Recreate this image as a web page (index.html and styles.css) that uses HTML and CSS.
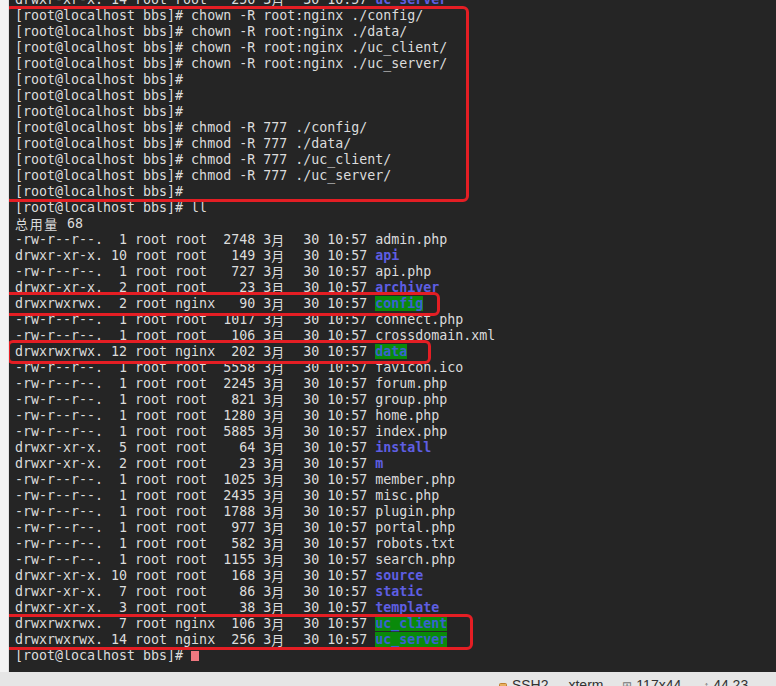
FILE: index.html
```html
<!DOCTYPE html>
<html lang="en">
<head>
    <meta charset="UTF-8">
    <title>xterm - bbs</title>
    <link rel="stylesheet" href="styles.css">
</head>
<body>
    <div class="window">
        <div class="main">
            <div class="gutter"></div>
            <div class="term">
                <div class="screen">
                    <div class="ln">drwxr-xr-x. 14 root root   256 3<span class="w">月</span>  30 10:57 <span class="dir">uc_server</span></div>
                    <div class="ln">[root@localhost bbs]# chown -R root:nginx ./config/</div>
                    <div class="ln">[root@localhost bbs]# chown -R root:nginx ./data/</div>
                    <div class="ln">[root@localhost bbs]# chown -R root:nginx ./uc_client/</div>
                    <div class="ln">[root@localhost bbs]# chown -R root:nginx ./uc_server/</div>
                    <div class="ln">[root@localhost bbs]#</div>
                    <div class="ln">[root@localhost bbs]#</div>
                    <div class="ln">[root@localhost bbs]#</div>
                    <div class="ln">[root@localhost bbs]# chmod -R 777 ./config/</div>
                    <div class="ln">[root@localhost bbs]# chmod -R 777 ./data/</div>
                    <div class="ln">[root@localhost bbs]# chmod -R 777 ./uc_client/</div>
                    <div class="ln">[root@localhost bbs]# chmod -R 777 ./uc_server/</div>
                    <div class="ln">[root@localhost bbs]#</div>
                    <div class="ln">[root@localhost bbs]# ll</div>
                    <div class="ln"><span class="w narrow">总</span><span class="w narrow">用</span><span class="w narrow">量</span> 68</div>
                    <div class="ln">-rw-r--r--.  1 root root  2748 3<span class="w">月</span>  30 10:57 admin.php</div>
                    <div class="ln">drwxr-xr-x. 10 root root   149 3<span class="w">月</span>  30 10:57 <span class="dir">api</span></div>
                    <div class="ln">-rw-r--r--.  1 root root   727 3<span class="w">月</span>  30 10:57 api.php</div>
                    <div class="ln">drwxr-xr-x.  2 root root    23 3<span class="w">月</span>  30 10:57 <span class="dir">archiver</span></div>
                    <div class="ln">drwxrwxrwx.  2 root nginx   90 3<span class="w">月</span>  30 10:57 <span class="ow">config</span></div>
                    <div class="ln">-rw-r--r--.  1 root root  1017 3<span class="w">月</span>  30 10:57 connect.php</div>
                    <div class="ln">-rw-r--r--.  1 root root   106 3<span class="w">月</span>  30 10:57 crossdomain.xml</div>
                    <div class="ln">drwxrwxrwx. 12 root nginx  202 3<span class="w">月</span>  30 10:57 <span class="ow">data</span></div>
                    <div class="ln">-rw-r--r--.  1 root root  5558 3<span class="w">月</span>  30 10:57 favicon.ico</div>
                    <div class="ln">-rw-r--r--.  1 root root  2245 3<span class="w">月</span>  30 10:57 forum.php</div>
                    <div class="ln">-rw-r--r--.  1 root root   821 3<span class="w">月</span>  30 10:57 group.php</div>
                    <div class="ln">-rw-r--r--.  1 root root  1280 3<span class="w">月</span>  30 10:57 home.php</div>
                    <div class="ln">-rw-r--r--.  1 root root  5885 3<span class="w">月</span>  30 10:57 index.php</div>
                    <div class="ln">drwxr-xr-x.  5 root root    64 3<span class="w">月</span>  30 10:57 <span class="dir">install</span></div>
                    <div class="ln">drwxr-xr-x.  2 root root    23 3<span class="w">月</span>  30 10:57 <span class="dir">m</span></div>
                    <div class="ln">-rw-r--r--.  1 root root  1025 3<span class="w">月</span>  30 10:57 member.php</div>
                    <div class="ln">-rw-r--r--.  1 root root  2435 3<span class="w">月</span>  30 10:57 misc.php</div>
                    <div class="ln">-rw-r--r--.  1 root root  1788 3<span class="w">月</span>  30 10:57 plugin.php</div>
                    <div class="ln">-rw-r--r--.  1 root root   977 3<span class="w">月</span>  30 10:57 portal.php</div>
                    <div class="ln">-rw-r--r--.  1 root root   582 3<span class="w">月</span>  30 10:57 robots.txt</div>
                    <div class="ln">-rw-r--r--.  1 root root  1155 3<span class="w">月</span>  30 10:57 search.php</div>
                    <div class="ln">drwxr-xr-x. 10 root root   168 3<span class="w">月</span>  30 10:57 <span class="dir">source</span></div>
                    <div class="ln">drwxr-xr-x.  7 root root    86 3<span class="w">月</span>  30 10:57 <span class="dir">static</span></div>
                    <div class="ln">drwxr-xr-x.  3 root root    38 3<span class="w">月</span>  30 10:57 <span class="dir">template</span></div>
                    <div class="ln">drwxrwxrwx.  7 root nginx  106 3<span class="w">月</span>  30 10:57 <span class="ow">uc_client</span></div>
                    <div class="ln">drwxrwxrwx. 14 root nginx  256 3<span class="w">月</span>  30 10:57 <span class="ow">uc_server</span></div>
                    <div class="ln">[root@localhost bbs]# <span class="cursor"></span></div>
                </div>

                <!-- red highlight marks drawn over the screenshot -->
                <div class="mark mark-cmds"></div>
                <div class="mark mark-config"></div>
                <div class="mark mark-data"></div>
                <div class="mark mark-uc"></div>
            </div>
        </div>
        <div class="status">
            <span class="item ssh">
                <svg class="lock" width="8" height="10" viewBox="0 0 8 10">
                    <rect x="0.5" y="3.5" width="7" height="6" rx="1" fill="#e8b060" stroke="#c08030"/>
                </svg>
                SSH2
            </span>
            <span class="item term-type">xterm</span>
            <span class="item size"><span class="glyph">&#8862;</span> 117x44</span>
            <span class="item pos"><span class="glyph">&#8597;</span> 44,23</span>
        </div>
    </div>
</body>
</html>
```

FILE: styles.css
```css
body {
    margin: 0;
    padding: 0;
    background-color: #f0f0f0;
    overflow: hidden;
}

.window {
    width: 776px;
    height: 686px;
    display: flex;
    flex-direction: column;
}

.main {
    display: flex;
    height: 672px;
}

.gutter {
    width: 9px;
    background-color: #f3f3f3;
    border-right: 1px solid #e2e2e2;
    box-sizing: border-box;
}

.term {
    position: relative;
    flex: 1;
    background-color: #252525;
    overflow: hidden;
}

.screen {
    margin-top: -8px;
    padding-left: 6px;
    font-family: "DejaVu Sans Mono", monospace;
    font-size: 13.3px;
    color: #dcdcdc;
}

.ln {
    height: 16px;
    line-height: 16px;
    white-space: pre;
}

.w {
    display: inline-block;
    width: 16px;
    height: 16px;
    vertical-align: top;
    font-family: "Noto Sans CJK SC", sans-serif;
    font-size: 13px;
    line-height: 16px;
}

.w.narrow {
    width: 14.67px;
}

.dir {
    color: #5e5ee2;
    font-weight: bold;
}

.ow {
    color: #3a62cf;
    font-weight: bold;
    background-color: #0a8a0a;
}

.cursor {
    display: inline-block;
    width: 8px;
    height: 10px;
    vertical-align: -1px;
    background-color: #f07880;
}

.mark {
    position: absolute;
    border: 3px solid #e41e24;
    border-radius: 6px;
    box-sizing: border-box;
}

.mark-cmds {
    left: -4px;
    top: 6px;
    width: 464px;
    height: 196px;
}

.mark-config {
    left: -8px;
    top: 292px;
    width: 439px;
    height: 24px;
}

.mark-data {
    left: -2px;
    top: 340px;
    width: 424px;
    height: 24px;
}

.mark-uc {
    left: -8px;
    top: 614px;
    width: 472px;
    height: 36px;
}

.status {
    height: 14px;
    background-color: #e6e6e6;
    position: relative;
    overflow: hidden;
    font-family: "Liberation Sans", Arial, sans-serif;
    font-size: 14px;
    color: #333;
    display: flex;
    padding-left: 499px;
    padding-top: 5px;
    box-sizing: border-box;
    line-height: 16px;
}

.item {
    white-space: nowrap;
}

.lock {
    margin-right: 1px;
}

.term-type {
    margin-left: 20px;
}

.size {
    margin-left: 19px;
}

.pos {
    margin-left: 22px;
}

.glyph {
    color: #777;
    font-size: 12px;
}
```
